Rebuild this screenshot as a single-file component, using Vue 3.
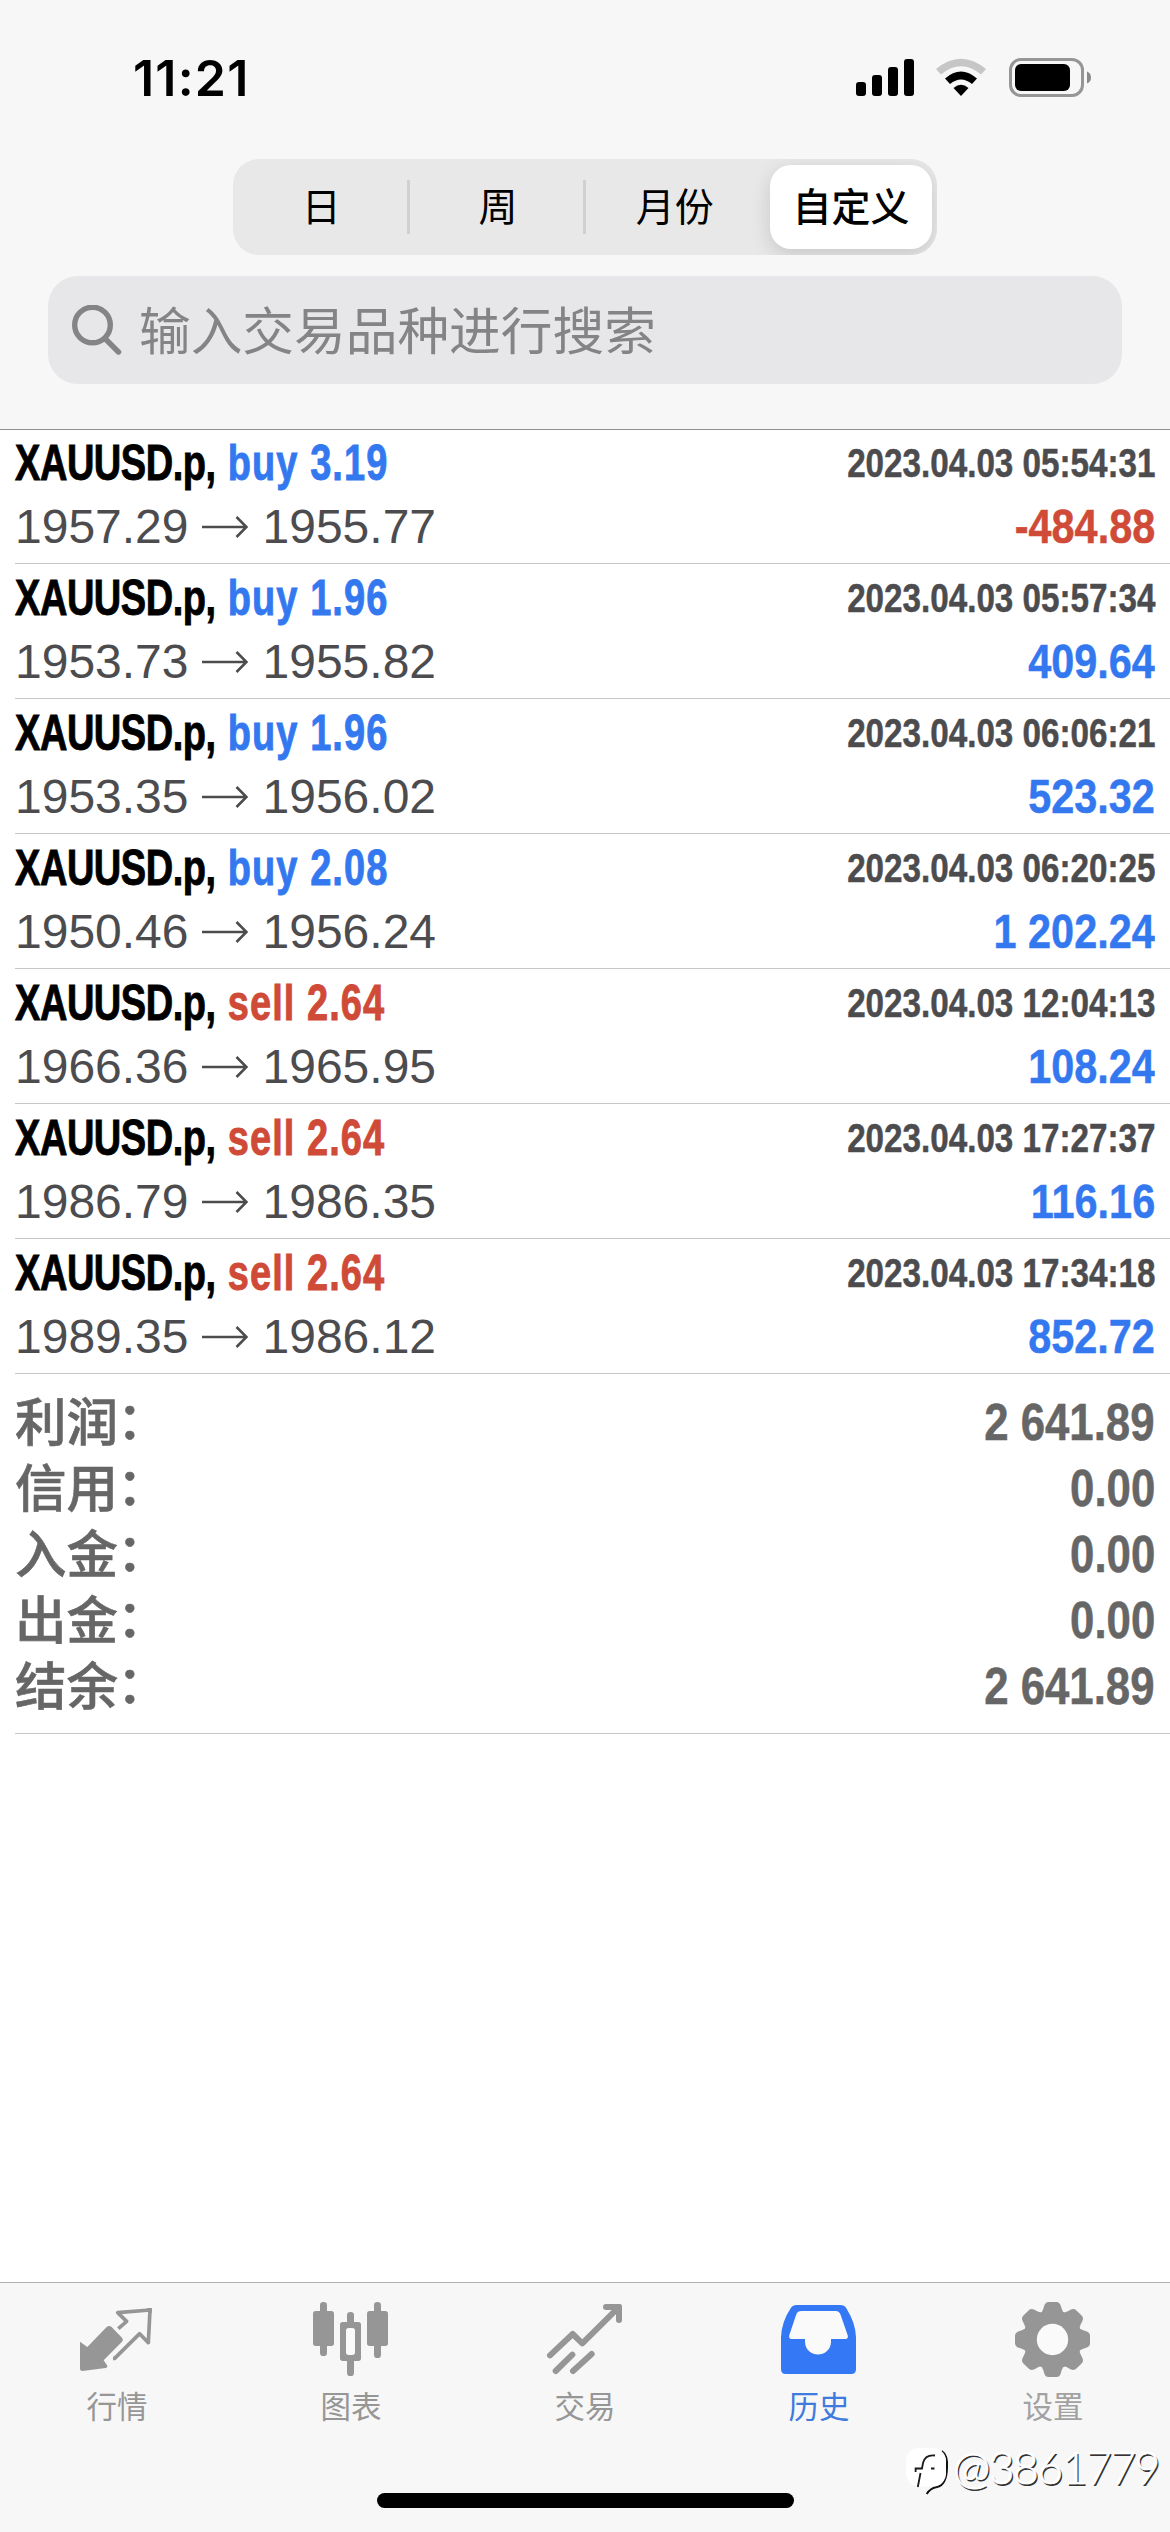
<script setup>
const segments = ['日', '周', '月份', '自定义']

const deals = [
  { side: 'buy', volume: '3.19', open: '1957.29', close: '1955.77', time: '2023.04.03 05:54:31', profit: '-484.88' },
  { side: 'buy', volume: '1.96', open: '1953.73', close: '1955.82', time: '2023.04.03 05:57:34', profit: '409.64' },
  { side: 'buy', volume: '1.96', open: '1953.35', close: '1956.02', time: '2023.04.03 06:06:21', profit: '523.32' },
  { side: 'buy', volume: '2.08', open: '1950.46', close: '1956.24', time: '2023.04.03 06:20:25', profit: '1 202.24' },
  { side: 'sell', volume: '2.64', open: '1966.36', close: '1965.95', time: '2023.04.03 12:04:13', profit: '108.24' },
  { side: 'sell', volume: '2.64', open: '1986.79', close: '1986.35', time: '2023.04.03 17:27:37', profit: '116.16' },
  { side: 'sell', volume: '2.64', open: '1989.35', close: '1986.12', time: '2023.04.03 17:34:18', profit: '852.72' },
]

const totals = [
  { label: '利润', value: '2 641.89' },
  { label: '信用', value: '0.00' },
  { label: '入金', value: '0.00' },
  { label: '出金', value: '0.00' },
  { label: '结余', value: '2 641.89' },
]
</script>

<template>
  <div class="screen">
    <header class="top">
      <div class="status">
        <span class="clock">11:21</span>
        <svg class="status-icons" viewBox="0 0 240 42" width="240" height="42">
          <rect x="0" y="26" width="10" height="14" rx="3" />
          <rect x="16" y="19" width="10" height="21" rx="3" />
          <rect x="32" y="11" width="10" height="29" rx="3" />
          <rect x="48" y="3" width="10" height="37" rx="3" />
          <path d="M80 13 Q105 -7.500 130 13 L125 18.500 Q105 2 85 18.500 Z" fill="#c6c6c6" />
          <path d="M89 22.500 Q105 8.500 121 22.500 L116 28 Q105 19 94 28 Z" />
          <path d="M97.500 32 Q105 25.500 112.500 32 L105 40 Z" />
          <rect x="154.500" y="3.500" width="72" height="36" rx="10.500" fill="none" stroke="#969696" stroke-width="3" />
          <rect x="159" y="8" width="55" height="27" rx="6" />
          <path d="M231 15.500 Q235 17 235 21.500 Q235 26 231 27.500 Z" fill="#8a8a8a" />
        </svg>
      </div>
      <nav class="segments">
        <span v-for="(s, i) in segments" :key="s" class="segment" :class="{ active: i === 3 }">{{ s }}</span>
      </nav>
      <div class="search">
        <svg class="glass" viewBox="0 0 50 50" width="50" height="50">
          <circle cx="20.500" cy="20" r="17.800" />
          <path d="M33 33.500 L46.500 47" />
        </svg>
        <span>输入交易品种进行搜索</span>
      </div>
    </header>

    <main class="content">
      <section v-for="d in deals" :key="d.time" class="deal">
        <div class="line">
          <span class="name"><span class="symbol">XAUUSD.p,</span> <span class="action" :class="d.side">{{ d.side }} {{ d.volume }}</span></span>
          <span class="time">{{ d.time }}</span>
        </div>
        <div class="line">
          <span class="prices">{{ d.open }}<svg class="arrow" viewBox="0 0 46 24" width="46" height="24"><path d="M0 12 H44 M34.500 2 L44.500 12 L34.500 22" /></svg>{{ d.close }}</span>
          <span class="profit" :class="{ loss: d.profit.startsWith('-') }">{{ d.profit }}</span>
        </div>
      </section>
      <section class="totals">
        <div v-for="t in totals" :key="t.label" class="total">
          <span class="label">{{ t.label }}<i>：</i></span>
          <span class="value">{{ t.value }}</span>
        </div>
      </section>
    </main>

    <footer class="bottom">
      <div class="tabs">
        <div class="tab">
          <svg viewBox="234 120 234 234">
            <path d="M240 245 L262 261 L320 201 Q327 195 334 200 L366 233 Q371 239 366 245 L311 301 L322 317 Q323 322 317 324 L247 333 Q240 333 240 327 Z" />
            <path d="M355 206 L380 184 L353 158 L450 150 L445 248 L419 221 L344 295 H339" fill="none" stroke="currentColor" stroke-width="11" stroke-linejoin="round" />
            <path d="M440 144 H456 L455 160 Z" />
          </svg>
          <span>行情</span>
        </div>
        <div class="tab">
          <svg viewBox="936 120 234 234">
            <rect x="960" y="126" width="21" height="162" rx="10" />
            <rect x="939" y="153" width="63" height="105" rx="8" />
            <rect x="1122" y="126" width="21" height="168" rx="10" />
            <rect x="1101" y="153" width="63" height="105" rx="8" />
            <rect x="1041" y="156" width="21" height="40" rx="10" />
            <rect x="1041" y="290" width="21" height="58" rx="10" />
            <rect x="1020" y="186" width="63" height="117" rx="8" />
            <rect x="1038" y="204" width="27" height="81" rx="8" fill="#fafafa" />
          </svg>
          <span>图表</span>
        </div>
        <div class="tab">
          <svg viewBox="438 120 234 234" fill="none" stroke="currentColor" stroke-width="18" stroke-linecap="round" stroke-linejoin="round">
            <path d="M450 286 L518 222 L547 250 L655 143 M618 141 H657 V180" />
            <path d="M467 333 L517 284 M519 333 L575 282" />
            <path d="M640 141 H657 V160 Z" fill="currentColor" />
          </svg>
          <span>交易</span>
        </div>
        <div class="tab active">
          <svg viewBox="30 120 234 234">
            <path d="M80 135 H211 Q223 135 229 145 Q257 190 258 232 V328 Q258 342 244 342 H47 Q33 342 33 328 V232 Q35 185 62 145 Q68 135 80 135 Z" />
            <path d="M94 153 Q83 153 79 163 L58 225 Q55 237 65 237 H105 V246 C107 296 181 296 183 246 V237 H226 Q236 237 233 226 L212 165 Q208 153 197 153 Z" fill="#fafafa" />
          </svg>
          <span>历史</span>
        </div>
        <div class="tab settings">
          <svg viewBox="732 120 234 234">
            <g transform="translate(847.500 238.500)">
              <circle r="88" />
              <path v-for="n in 8" :key="n" :transform="`rotate(${n * 45})`" d="M-38 -78 Q-30 -82 -27 -94 L-25 -101 Q-21 -112.500 -12 -112.500 H12 Q21 -112.500 25 -101 L27 -94 Q30 -82 38 -78 Z" />
              <circle r="47" fill="#fafafa" />
            </g>
          </svg>
          <span>设置</span>
        </div>
      </div>
      <div class="home-bar"></div>
      <div class="watermark">
        <svg viewBox="0 0 48 54" width="48" height="54">
          <path d="M36.700 8 Q43 12 42 25 Q41.500 42 32 44 Q25.500 45 21.700 51" fill="none" stroke="#111" stroke-width="2" />
          <rect x="1" y="5" width="40" height="38.500" rx="13" fill="#fff" />
          <path d="M30 12.500 Q20 11.500 18 20 L17 25.500 H10.600 V29 M15.500 30 L12.800 44 M26 25.500 H29.500" fill="none" stroke="#1a1a1a" stroke-width="1.800" />
        </svg>
        <span>@3861779</span>
      </div>
    </footer>
  </div>
</template>

<style>
body {
  background: #fff;
}
</style>

<style scoped>
.screen {
  width: 1170px;
  height: 2532px;
  display: flex;
  flex-direction: column;
  overflow: hidden;
  background: #fff;
  color: #000;
  font-family: 'Liberation Sans', 'Noto Sans CJK SC', sans-serif;
}
.top {
  box-sizing: border-box;
  height: 430px;
  flex: none;
  background: #f7f7f7;
  border-bottom: 1px solid #8e8e90;
}
.status {
  height: 159px;
  display: flex;
  justify-content: space-between;
  align-items: flex-start;
  padding: 56px 74px 0 133px;
  box-sizing: border-box;
}
.clock {
  font: 600 50px/44px Inter, sans-serif;
  letter-spacing: 1.2px;
}
.segments {
  box-sizing: border-box;
  width: 704px;
  height: 96px;
  margin: 0 auto;
  padding: 6px 5px 6px 0;
  display: flex;
  border-radius: 26px;
  background: #e8e8e8;
  overflow: hidden;
}
.segment {
  flex: 0 0 176.7px;
  text-align: center;
  font: 400 39px/79px 'Noto Sans CJK SC', sans-serif;
}
.segment:nth-child(-n + 2) {
  background: linear-gradient(#d0d0d2, #d0d0d2) right center / 3px 54px no-repeat;
}
.segment.active {
  flex: 0 0 162px;
  margin-left: 6.9px;
  border-radius: 21px;
  background: #fff;
  font-weight: 500;
  box-shadow: 0 6px 20px rgba(0, 0, 0, 0.14);
}
.search {
  margin: 21px 48px 0;
  height: 108px;
  display: flex;
  align-items: center;
  border-radius: 30px;
  background: #e7e7e9;
  color: #848486;
  font: 400 51.7px/104px 'Noto Sans CJK SC', sans-serif;
}
.search span {
  height: 108px;
}
.glass {
  margin: 0 17px 0 24px;
  fill: none;
  stroke: #848486;
  stroke-width: 5.4;
  stroke-linecap: round;
}
.content {
  flex: 1;
}
.deal {
  box-sizing: border-box;
  height: 135px;
  margin-left: 15px;
  padding: 3px 15px 0 0;
  border-bottom: 1px solid #c7c7c9;
}
.deal:first-child {
  height: 134px;
  padding-top: 2px;
}
.line {
  height: 63px;
  display: flex;
  justify-content: space-between;
  line-height: 63px;
  white-space: nowrap;
}
.name,
.time,
.profit,
.value {
  font-weight: 700;
  transform-origin: right;
  -webkit-text-stroke: 0.5px currentColor;
}
.name {
  font-size: 50px;
  transform: scaleX(0.76);
  transform-origin: left;
  -webkit-text-stroke-width: 0.9px;
}
.symbol {
  letter-spacing: -0.6px;
}
.action {
  margin-left: 2px;
  letter-spacing: 1.4px;
}
.buy {
  color: #3478f0;
}
.sell,
.profit.loss {
  color: #cf4a37;
}
.time {
  font-size: 40px;
  color: #4c4c4f;
  transform: scaleX(0.83);
}
.prices {
  display: flex;
  align-items: center;
  font-size: 48px;
  color: #4c4c4f;
}
.arrow {
  margin: 0 15px 0 13px;
  fill: none;
  stroke: #4c4c4f;
  stroke-width: 2.6;
}
.profit {
  font-size: 49px;
  color: #3478f0;
  transform: scaleX(0.845);
}
.totals {
  box-sizing: border-box;
  height: 360px;
  margin-left: 15px;
  padding: 16px 15px 0 0;
  border-bottom: 1px solid #c7c7c9;
}
.total {
  height: 66px;
  display: flex;
  justify-content: space-between;
  line-height: 66px;
  color: #666;
}
.label {
  font-size: 51.5px;
  font-weight: 500;
  -webkit-text-stroke: 0.6px currentColor;
}
.label i {
  display: inline-block;
  font-style: normal;
  transform: translate(-1px, -2px);
}
.value {
  font-size: 51px;
  transform: scaleX(0.858);
}
.bottom {
  position: relative;
  box-sizing: border-box;
  flex: none;
  height: 250px;
  border-top: 1px solid #b0b0b2;
  background: #f7f7f7;
}
.tabs {
  display: grid;
  grid-template-columns: repeat(5, 1fr);
  padding-top: 17px;
}
.tab {
  display: flex;
  flex-direction: column;
  align-items: center;
  color: #969696;
  font: 400 30.5px/44px 'Noto Sans CJK SC', sans-serif;
}
.tab svg {
  width: 78px;
  height: 78px;
}
.tab svg:not([fill]) {
  fill: currentColor;
}
.tab span {
  margin-top: 5px;
}
.tab.active {
  color: #3478f6;
}
.tab.active span {
  color: #3f7bdc;
}
.tab.settings span {
  color: #a2a2a2;
}
.home-bar {
  width: 417px;
  height: 15px;
  margin: 66px auto 0;
  border-radius: 8px;
  background: #000;
}
.watermark {
  position: absolute;
  left: 905px;
  top: 160px;
  display: flex;
  align-items: flex-start;
  color: #fff;
  font: 300 45px/48px Lato, sans-serif;
  letter-spacing: -1.8px;
  -webkit-text-stroke: 0.6px #fff;
  text-shadow: 1.5px 1.5px 0 #333;
}
</style>
